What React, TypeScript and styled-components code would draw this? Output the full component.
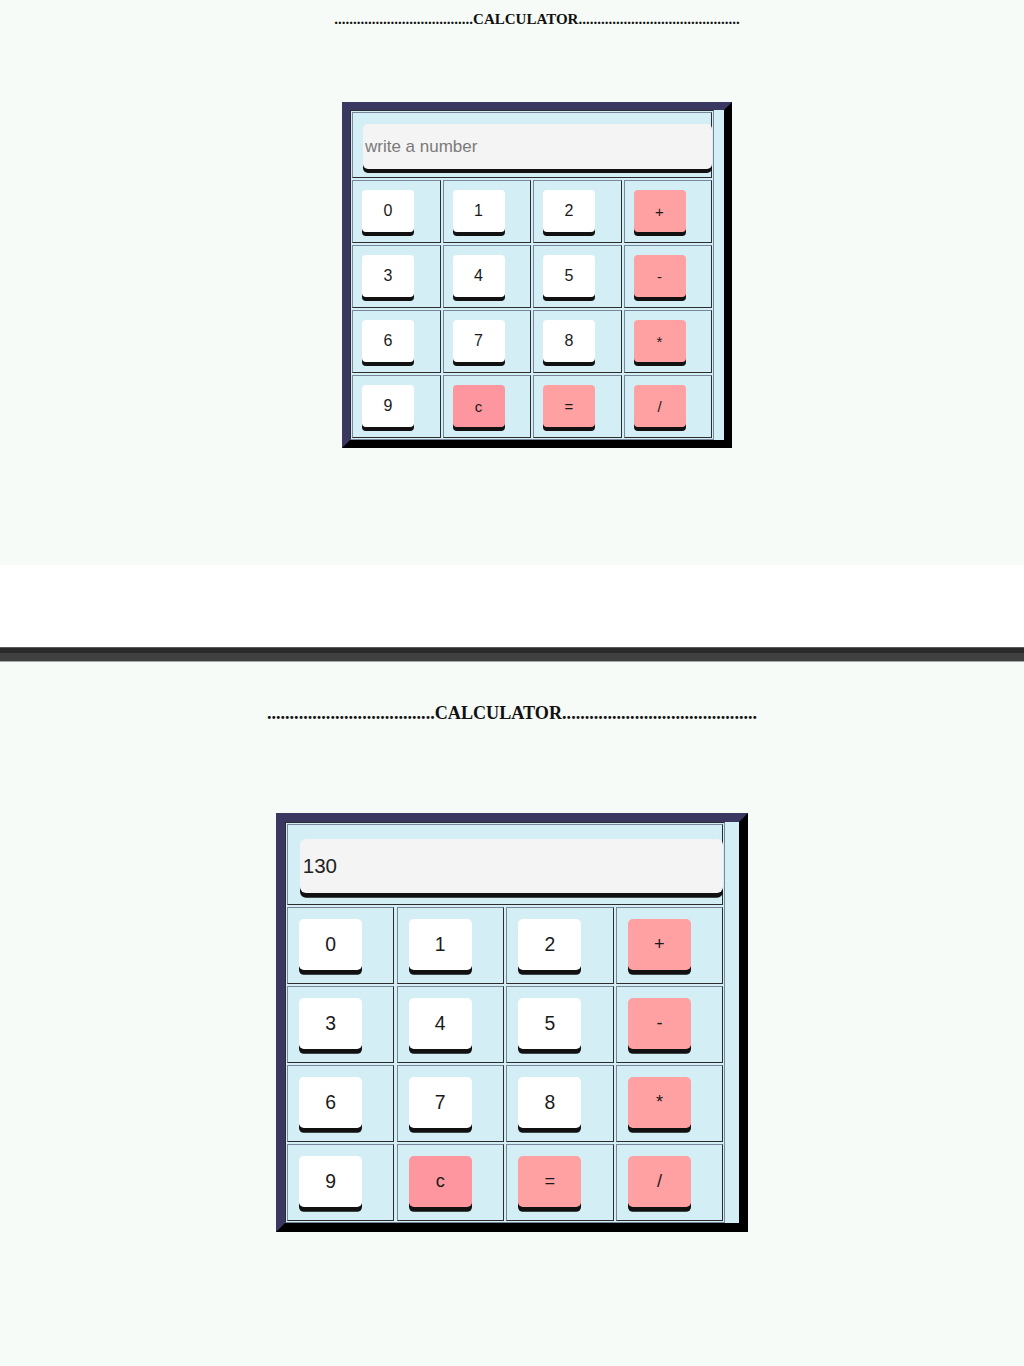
import React from "react";
import styled, { createGlobalStyle } from "styled-components";

type S = { $s: number };
const u = (n: number) => (p: S) => `${n * p.$s}px`;

const GlobalStyle = createGlobalStyle`
  html, body { margin: 0; padding: 0; background: #ffffff; }
  body { font-family: "Liberation Sans", Arial, sans-serif; }
`;

const Page = styled.div`
  width: 1024px;
  display: flex;
  flex-direction: column;
`;

const Screen = styled.section<S & { $h: number; $shift: number; $top: number }>`
  height: ${(p) => p.$h}px;
  box-sizing: border-box;
  background: #f6fbf7;
  display: flex;
  flex-direction: column;
  align-items: center;
  padding-left: ${(p) => p.$shift}px;
  padding-top: ${(p) => p.$top}px;
  gap: ${u(74)};
`;

const Title = styled.h4<S>`
  margin: 0;
  font-family: "Liberation Serif", "Times New Roman", serif;
  font-weight: bold;
  font-size: ${u(15)};
  line-height: ${u(17)};
  color: #111;
  white-space: nowrap;
`;

const Band = styled.div`
  height: 82px;
  background: #ffffff;
`;

const Divider = styled.div`
  height: 15px;
  box-sizing: border-box;
  border-top: 1px solid #5a5a5a;
  border-bottom: 1px solid #a0a8a6;
  background: linear-gradient(#2a2a2a 0 5px, #404040 5px 100%);
`;

const Box = styled.div<S>`
  box-sizing: border-box;
  width: ${u(390)};
  height: ${u(346)};
  border: ${u(8)} solid;
  border-color: #3a3860 #000 #000 #3a3860;
  background: #d3eff5;
  display: flex;
`;

const Table = styled.div<S>`
  box-sizing: border-box;
  width: ${u(364)};
  height: 100%;
  border: 1px solid;
  border-color: #2c2c2c #7a879b #7a879b #2c2c2c;
  padding: ${u(1)};
  display: grid;
  grid-template-columns: repeat(4, 1fr);
  grid-template-rows: 66fr 63fr 63fr 63fr 63fr;
  gap: ${u(2)};
`;

const Cell = styled.div<S & { $wide?: boolean }>`
  box-sizing: border-box;
  border: 1px solid;
  border-color: #7a879b #2c2c2c #2c2c2c #7a879b;
  grid-column: ${(p) => (p.$wide ? "1 / span 4" : "auto")};
  padding: ${(p) => (p.$wide ? `${11 * p.$s}px 0 0 ${10 * p.$s}px` : `${9 * p.$s}px 0 0 ${9 * p.$s}px`)};
  min-width: 0;
`;

const Display = styled.input<S>`
  display: block;
  box-sizing: border-box;
  width: ${u(349)};
  height: ${u(45)};
  border: none;
  outline: none;
  border-radius: ${u(5)};
  background: #f4f4f4;
  box-shadow: 0 ${u(4)} 0 #111;
  padding: 0 0 0 ${u(2)};
  font-family: "Liberation Sans", Arial, sans-serif;
  font-size: ${u(17)};
  color: #222;
  &::placeholder { color: #7a7a7a; }
`;

const Key = styled.button<S & { $op?: boolean; $clear?: boolean }>`
  box-sizing: border-box;
  width: ${u(52)};
  height: ${u(42)};
  border: none;
  border-radius: ${u(4)};
  padding: 0;
  background: ${(p) => (p.$clear ? "#fd969e" : p.$op ? "#ffa1a2" : "#ffffff")};
  box-shadow: 0 ${u(4)} 0 #111;
  font-family: "Liberation Sans", Arial, sans-serif;
  font-size: ${(p) => (p.$op ? 15 * p.$s : 16 * p.$s)}px;
  color: #1a1a1a;
  display: flex;
  align-items: center;
  justify-content: center;
  cursor: pointer;
`;

const keys: { label: string; op?: boolean; clear?: boolean }[] = [
  { label: "0" }, { label: "1" }, { label: "2" }, { label: "+", op: true },
  { label: "3" }, { label: "4" }, { label: "5" }, { label: "-", op: true },
  { label: "6" }, { label: "7" }, { label: "8" }, { label: "*", op: true },
  { label: "9" }, { label: "c", op: true, clear: true }, { label: "=", op: true }, { label: "/", op: true },
];

const LEFT_DOTS = ".".repeat(37);
const RIGHT_DOTS = ".".repeat(43);

function Calculator({ s, value }: { s: number; value?: string }) {
  return (
    <Box $s={s}>
      <Table $s={s}>
        <Cell $s={s} $wide>
          {value !== undefined ? (
            <Display $s={s} type="text" defaultValue={value} />
          ) : (
            <Display $s={s} type="text" placeholder="write a number" />
          )}
        </Cell>
        {keys.map((k) => (
          <Cell $s={s} key={k.label}>
            <Key $s={s} $op={k.op} $clear={k.clear}>
              {k.label}
            </Key>
          </Cell>
        ))}
      </Table>
    </Box>
  );
}

export default function App() {
  return (
    <Page>
      <GlobalStyle />
      <Screen $s={1} $h={565} $shift={50} $top={11}>
        <Title $s={1}>
          {LEFT_DOTS}CALCULATOR{RIGHT_DOTS}
        </Title>
        <Calculator s={1} />
      </Screen>
      <Band />
      <Divider />
      <Screen $s={1.21} $h={704} $shift={0} $top={41}>
        <Title $s={1.21}>
          {LEFT_DOTS}CALCULATOR{RIGHT_DOTS}
        </Title>
        <Calculator s={1.21} value="130" />
      </Screen>
    </Page>
  );
}
